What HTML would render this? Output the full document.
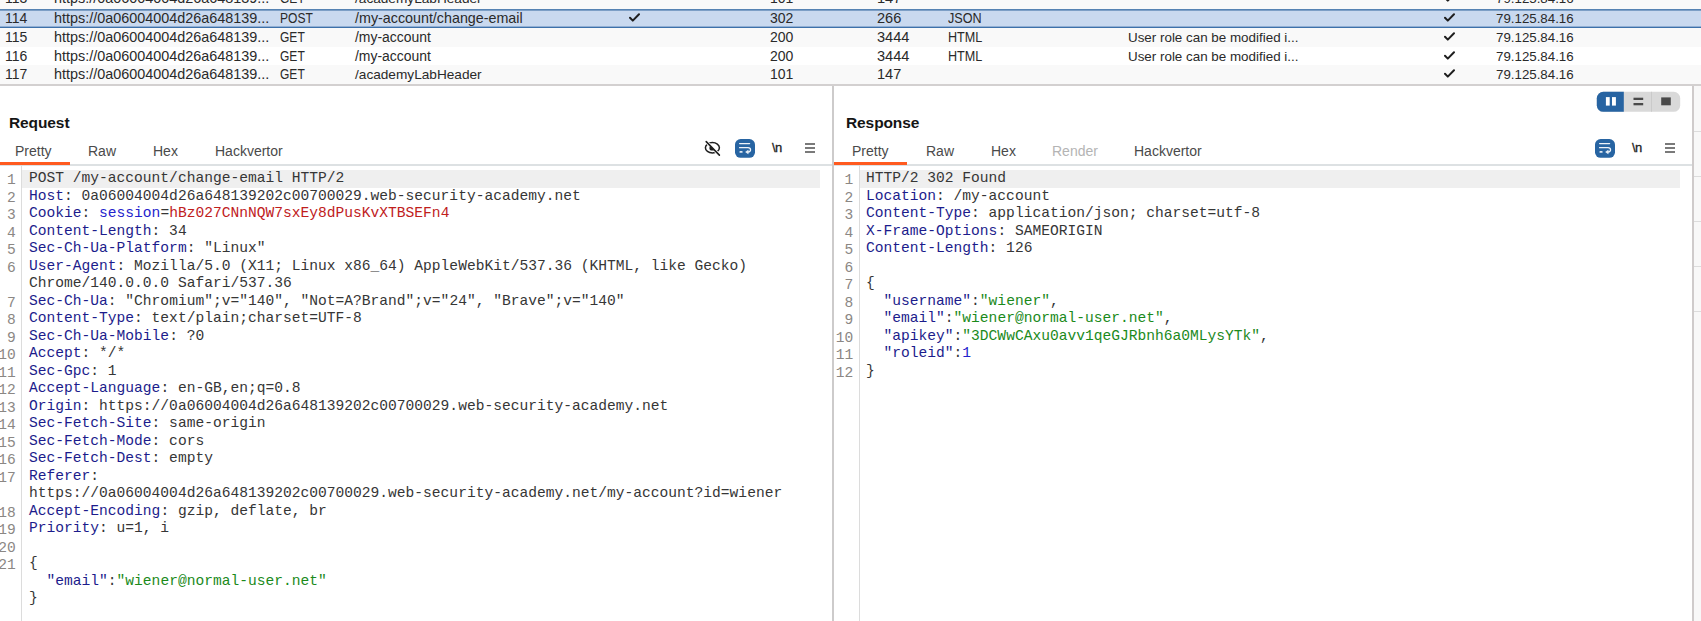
<!DOCTYPE html>
<html><head><meta charset="utf-8">
<style>
*{margin:0;padding:0;box-sizing:border-box}
html,body{width:1701px;height:621px;overflow:hidden;background:#fff}
body{position:relative;font-family:"Liberation Sans",sans-serif;color:#2a2a2a}
.abs{position:absolute}
.row{position:absolute;left:0;width:1701px;height:19px;background:#f9f9f9}
.row.w{background:#fff}
.row.sel{background:linear-gradient(to bottom,#5683b3 0,#5683b3 1px,#7d9fc6 1px,#7d9fc6 2px,#c9d9ef 2px,#c9d9ef 17px,#92afd3 17px,#92afd3 18px,#3d71aa 18px,#3d71aa 19px)}
.c{position:absolute;top:0;font-size:14px;line-height:19px;white-space:nowrap}
.sx{display:inline-block;transform-origin:0 50%}
.chk{position:absolute;width:11px;height:9px}
.mono{font-family:"Liberation Mono",monospace;font-size:14.6px;white-space:pre}
.ln{position:absolute;left:0;width:16px;text-align:right;color:#8b8784;font-family:"Liberation Mono",monospace;font-size:14.58px;line-height:17.5px;white-space:pre}
.code{position:absolute;line-height:17.5px;color:#363636}
.hn{color:#1c1c8c}
.sb{color:#2323cc}
.rd{color:#c0201c}
.gr{color:#1b8a1b}
.nm{color:#2323cc}
.tab{position:absolute;font-size:14px;color:#4a4a4a;line-height:16px;white-space:nowrap}
.ttl{position:absolute;font-size:15.5px;font-weight:bold;color:#151515;line-height:18px;letter-spacing:-0.1px}
</style></head><body>

<!-- ===== TABLE ===== -->
<div id="tbl">
<div class="row" style="top:-10px;height:19px">
<div class="c" style="left:5px;top:-1px;">113</div>
<div class="c" style="left:54px;font-size:14.4px;top:-1px;">https://0a06004004d26a648139...</div>
<div class="c" style="left:280px;top:-1px;"><span class="sx" style="transform:scaleX(0.86)">GET</span></div>
<div class="c" style="left:355px;font-size:13.65px;top:-1px;">/academyLabHeader</div>
<div class="c" style="left:770px;top:-1px;">101</div>
<div class="c" style="left:877px;font-size:14.6px;top:-1px;">147</div>
<svg class="chk" style="left:1444px;top:3px" viewBox="0 0 11 9"><path d="M1 4.8 L3.8 7.6 L10 1.2" fill="none" stroke="#1e1e1e" stroke-width="2" stroke-linecap="round" stroke-linejoin="round"/></svg>
<div class="c" style="left:1496px;font-size:13.3px;top:-1px;">79.125.84.16</div>
</div>
<div class="row sel" style="top:9px;height:19px">
<div class="c" style="left:5px;top:0px;">114</div>
<div class="c" style="left:54px;font-size:14.4px;top:0px;">https://0a06004004d26a648139...</div>
<div class="c" style="left:280px;top:0px;"><span class="sx" style="transform:scaleX(0.86)">POST</span></div>
<div class="c" style="left:355px;font-size:14.3px;top:0px;">/my-account/change-email</div>
<svg class="chk" style="left:629px;top:4px" viewBox="0 0 11 9"><path d="M1 4.8 L3.8 7.6 L10 1.2" fill="none" stroke="#1e1e1e" stroke-width="2" stroke-linecap="round" stroke-linejoin="round"/></svg>
<div class="c" style="left:770px;top:0px;">302</div>
<div class="c" style="left:877px;font-size:14.6px;top:0px;">266</div>
<div class="c" style="left:948px;top:0px;"><span class="sx" style="transform:scaleX(0.9)">JSON</span></div>
<svg class="chk" style="left:1444px;top:4px" viewBox="0 0 11 9"><path d="M1 4.8 L3.8 7.6 L10 1.2" fill="none" stroke="#1e1e1e" stroke-width="2" stroke-linecap="round" stroke-linejoin="round"/></svg>
<div class="c" style="left:1496px;font-size:13.3px;top:0px;">79.125.84.16</div>
</div>
<div class="row" style="top:28px;height:19px">
<div class="c" style="left:5px;top:0px;">115</div>
<div class="c" style="left:54px;font-size:14.4px;top:0px;">https://0a06004004d26a648139...</div>
<div class="c" style="left:280px;top:0px;"><span class="sx" style="transform:scaleX(0.86)">GET</span></div>
<div class="c" style="left:355px;font-size:13.95px;top:0px;">/my-account</div>
<div class="c" style="left:770px;top:0px;">200</div>
<div class="c" style="left:877px;font-size:14.6px;top:0px;">3444</div>
<div class="c" style="left:948px;top:0px;"><span class="sx" style="transform:scaleX(0.9)">HTML</span></div>
<div class="c" style="left:1128px;font-size:13.4px;top:0px;">User role can be modified i...</div>
<svg class="chk" style="left:1444px;top:4px" viewBox="0 0 11 9"><path d="M1 4.8 L3.8 7.6 L10 1.2" fill="none" stroke="#1e1e1e" stroke-width="2" stroke-linecap="round" stroke-linejoin="round"/></svg>
<div class="c" style="left:1496px;font-size:13.3px;top:0px;">79.125.84.16</div>
</div>
<div class="row w" style="top:47px;height:19px">
<div class="c" style="left:5px;top:0px;">116</div>
<div class="c" style="left:54px;font-size:14.4px;top:0px;">https://0a06004004d26a648139...</div>
<div class="c" style="left:280px;top:0px;"><span class="sx" style="transform:scaleX(0.86)">GET</span></div>
<div class="c" style="left:355px;font-size:13.95px;top:0px;">/my-account</div>
<div class="c" style="left:770px;top:0px;">200</div>
<div class="c" style="left:877px;font-size:14.6px;top:0px;">3444</div>
<div class="c" style="left:948px;top:0px;"><span class="sx" style="transform:scaleX(0.9)">HTML</span></div>
<div class="c" style="left:1128px;font-size:13.4px;top:0px;">User role can be modified i...</div>
<svg class="chk" style="left:1444px;top:4px" viewBox="0 0 11 9"><path d="M1 4.8 L3.8 7.6 L10 1.2" fill="none" stroke="#1e1e1e" stroke-width="2" stroke-linecap="round" stroke-linejoin="round"/></svg>
<div class="c" style="left:1496px;font-size:13.3px;top:0px;">79.125.84.16</div>
</div>
<div class="row" style="top:65px;height:19px">
<div class="c" style="left:5px;top:0px;">117</div>
<div class="c" style="left:54px;font-size:14.4px;top:0px;">https://0a06004004d26a648139...</div>
<div class="c" style="left:280px;top:0px;"><span class="sx" style="transform:scaleX(0.86)">GET</span></div>
<div class="c" style="left:355px;font-size:13.65px;top:0px;">/academyLabHeader</div>
<div class="c" style="left:770px;top:0px;">101</div>
<div class="c" style="left:877px;font-size:14.6px;top:0px;">147</div>
<svg class="chk" style="left:1444px;top:4px" viewBox="0 0 11 9"><path d="M1 4.8 L3.8 7.6 L10 1.2" fill="none" stroke="#1e1e1e" stroke-width="2" stroke-linecap="round" stroke-linejoin="round"/></svg>
<div class="c" style="left:1496px;font-size:13.3px;top:0px;">79.125.84.16</div>
</div>
</div>

<!-- ===== PANELS ===== -->
<div id="panels">

<div class="abs" style="left:0;top:84px;width:1701px;height:2px;background:#d3d0d0"></div>
<div class="abs" style="left:832px;top:86px;width:2px;height:535px;background:#cdcbcb"></div>
<div class="abs" style="left:1692px;top:86px;width:2px;height:535px;background:#cfcbcb"></div>
<div class="abs" style="left:1694px;top:86px;width:7px;height:535px;background:#f8f8f8"></div>
<div class="abs" style="left:1694px;top:131px;width:7px;height:1px;background:#dcdcdc"></div><div class="abs" style="left:1694px;top:176px;width:7px;height:1px;background:#dcdcdc"></div><div class="abs" style="left:1694px;top:221px;width:7px;height:1px;background:#dcdcdc"></div><div class="abs" style="left:1694px;top:266px;width:7px;height:1px;background:#dcdcdc"></div><div class="abs" style="left:1694px;top:311px;width:7px;height:1px;background:#dcdcdc"></div>

<div class="ttl" style="left:9px;top:113.5px">Request</div>
<div class="ttl" style="left:846px;top:113.5px">Response</div>

<div class="tab" style="left:15px;top:142.6px">Pretty</div>
<div class="tab" style="left:88px;top:142.6px">Raw</div>
<div class="tab" style="left:153px;top:142.6px">Hex</div>
<div class="tab" style="left:215px;top:142.6px">Hackvertor</div>
<div class="abs" style="left:0;top:164px;width:832px;height:1.5px;background:#dde1e3"></div>
<div class="abs" style="left:0;top:162px;width:70px;height:2.5px;background:#ff5a1f"></div>

<div class="tab" style="left:852px;top:142.6px">Pretty</div>
<div class="tab" style="left:926px;top:142.6px">Raw</div>
<div class="tab" style="left:991px;top:142.6px">Hex</div>
<div class="tab" style="left:1052px;top:142.6px;color:#b4b4b4">Render</div>
<div class="tab" style="left:1134px;top:142.6px">Hackvertor</div>
<div class="abs" style="left:834px;top:164px;width:858px;height:1.5px;background:#dde1e3"></div>
<div class="abs" style="left:834px;top:162px;width:73px;height:2.5px;background:#ff5a1f"></div>

<svg class="abs" style="left:700px;top:136px" width="24" height="24" viewBox="0 0 24 24">
<defs><clipPath id="eyc"><polygon points="-3.6,-4.4 29.2,29.1 -10,29 -10,-4.4"/></clipPath></defs>
<ellipse cx="12.4" cy="11.8" rx="7" ry="5.2" fill="none" stroke="#1e1e1e" stroke-width="1.5"/>
<path d="M5.2 4.6 L20.4 20.2" stroke="#fff" stroke-width="3.2"/>
<circle cx="12.1" cy="11.9" r="2.7" fill="#1e1e1e" clip-path="url(#eyc)"/>
<path d="M6.2 5.6 L19.4 19.1" stroke="#1e1e1e" stroke-width="1.6" stroke-linecap="round"/>
</svg>
<svg class="abs" style="left:735px;top:139px" width="20" height="19" viewBox="0 0 20 19">
<rect x="0" y="0" width="20" height="18.8" rx="5.6" fill="#2764a2"/>
<path d="M4.6 4.6 H14.6" stroke="#eef3f9" stroke-width="1.3" stroke-linecap="round"/>
<path d="M4.6 8.7 H13 C16.4 8.7 16.4 13 13 13 H12" fill="none" stroke="#eef3f9" stroke-width="1.3" stroke-linecap="round"/>
<path d="M10.6 13 L13.2 11.2 L13.2 14.8 Z" fill="#e6edf5" stroke="#e6edf5" stroke-width="0.6" stroke-linejoin="round"/>
<rect x="4.5" y="12" width="3.1" height="1.8" rx="0.6" fill="#dfe8f2"/>
</svg>
<div class="abs" style="left:772px;top:141.2px;font-size:13px;line-height:14px;color:#222;letter-spacing:-0.6px;-webkit-text-stroke:0.3px #222">\n</div>
<svg class="abs" style="left:805px;top:143px" width="10" height="10" viewBox="0 0 10 10">
<rect x="0" y="0" width="10" height="2" fill="#7a7a7a"/><rect x="0" y="4" width="10" height="2" fill="#7a7a7a"/><rect x="0" y="8" width="10" height="2" fill="#7a7a7a"/></svg>
<svg class="abs" style="left:1595px;top:139px" width="20" height="19" viewBox="0 0 20 19">
<rect x="0" y="0" width="20" height="18.8" rx="5.6" fill="#2764a2"/>
<path d="M4.6 4.6 H14.6" stroke="#eef3f9" stroke-width="1.3" stroke-linecap="round"/>
<path d="M4.6 8.7 H13 C16.4 8.7 16.4 13 13 13 H12" fill="none" stroke="#eef3f9" stroke-width="1.3" stroke-linecap="round"/>
<path d="M10.6 13 L13.2 11.2 L13.2 14.8 Z" fill="#e6edf5" stroke="#e6edf5" stroke-width="0.6" stroke-linejoin="round"/>
<rect x="4.5" y="12" width="3.1" height="1.8" rx="0.6" fill="#dfe8f2"/>
</svg>
<div class="abs" style="left:1632px;top:141.2px;font-size:13px;line-height:14px;color:#222;letter-spacing:-0.6px;-webkit-text-stroke:0.3px #222">\n</div>
<svg class="abs" style="left:1665px;top:143px" width="10" height="10" viewBox="0 0 10 10">
<rect x="0" y="0" width="10" height="2" fill="#7a7a7a"/><rect x="0" y="4" width="10" height="2" fill="#7a7a7a"/><rect x="0" y="8" width="10" height="2" fill="#7a7a7a"/></svg>
<svg class="abs" style="left:1596px;top:91px" width="85" height="21" viewBox="0 0 85 21">
<defs><clipPath id="tc"><rect x="0.8" y="0.8" width="83.4" height="20" rx="6.5"/></clipPath></defs>
<g clip-path="url(#tc)">
<rect x="0" y="0" width="85" height="21" fill="#d9d9d9"/>
<rect x="0" y="0" width="27.8" height="21" fill="#2764a2"/>
<rect x="55.2" y="0" width="0.8" height="21" fill="#c6c6c6"/>
</g>
<rect x="9.9" y="6.1" width="3.8" height="8.5" fill="#fff"/>
<rect x="16" y="6.1" width="3.9" height="8.5" fill="#fff"/>
<rect x="37.5" y="6.7" width="9.7" height="2.3" fill="#4a4a4a"/>
<rect x="37.5" y="12" width="9.7" height="2.3" fill="#4a4a4a"/>
<rect x="65.2" y="6.4" width="9.6" height="7.9" fill="#4a4a4a"/>
</svg>

<div class="abs" style="left:21px;top:165px;width:1px;height:456px;background:#dcdcdc"></div>
<div class="abs" style="left:22px;top:170px;width:798px;height:18px;background:#efefef"></div>
<div class="abs" style="left:859px;top:165px;width:1px;height:456px;background:#dcdcdc"></div>
<div class="abs" style="left:860px;top:170px;width:820px;height:18px;background:#efefef"></div>

<div class="ln" style="left:-24.3px;width:40px;top:172.20px">1</div>
<div class="code mono" style="left:29.0px;top:170.00px">POST /my-account/change-email HTTP/2</div>
<div class="ln" style="left:-24.3px;width:40px;top:189.70px">2</div>
<div class="code mono" style="left:29.0px;top:187.50px"><span class="hn">Host</span>: 0a06004004d26a648139202c00700029.web-security-academy.net</div>
<div class="ln" style="left:-24.3px;width:40px;top:207.20px">3</div>
<div class="code mono" style="left:29.0px;top:205.00px"><span class="hn">Cookie</span>: <span class="sb">session</span>=<span class="rd">hBz027CNnNQW7sxEy8dPusKvXTBSEFn4</span></div>
<div class="ln" style="left:-24.3px;width:40px;top:224.70px">4</div>
<div class="code mono" style="left:29.0px;top:222.50px"><span class="hn">Content-Length</span>: 34</div>
<div class="ln" style="left:-24.3px;width:40px;top:242.20px">5</div>
<div class="code mono" style="left:29.0px;top:240.00px"><span class="hn">Sec-Ch-Ua-Platform</span>: &quot;Linux&quot;</div>
<div class="ln" style="left:-24.3px;width:40px;top:259.70px">6</div>
<div class="code mono" style="left:29.0px;top:257.50px"><span class="hn">User-Agent</span>: Mozilla/5.0 (X11; Linux x86_64) AppleWebKit/537.36 (KHTML, like Gecko)</div>
<div class="code mono" style="left:29.0px;top:275.00px">Chrome/140.0.0.0 Safari/537.36</div>
<div class="ln" style="left:-24.3px;width:40px;top:294.70px">7</div>
<div class="code mono" style="left:29.0px;top:292.50px"><span class="hn">Sec-Ch-Ua</span>: &quot;Chromium&quot;;v=&quot;140&quot;, &quot;Not=A?Brand&quot;;v=&quot;24&quot;, &quot;Brave&quot;;v=&quot;140&quot;</div>
<div class="ln" style="left:-24.3px;width:40px;top:312.20px">8</div>
<div class="code mono" style="left:29.0px;top:310.00px"><span class="hn">Content-Type</span>: text/plain;charset=UTF-8</div>
<div class="ln" style="left:-24.3px;width:40px;top:329.70px">9</div>
<div class="code mono" style="left:29.0px;top:327.50px"><span class="hn">Sec-Ch-Ua-Mobile</span>: ?0</div>
<div class="ln" style="left:-24.3px;width:40px;top:347.20px">10</div>
<div class="code mono" style="left:29.0px;top:345.00px"><span class="hn">Accept</span>: */*</div>
<div class="ln" style="left:-24.3px;width:40px;top:364.70px">11</div>
<div class="code mono" style="left:29.0px;top:362.50px"><span class="hn">Sec-Gpc</span>: 1</div>
<div class="ln" style="left:-24.3px;width:40px;top:382.20px">12</div>
<div class="code mono" style="left:29.0px;top:380.00px"><span class="hn">Accept-Language</span>: en-GB,en;q=0.8</div>
<div class="ln" style="left:-24.3px;width:40px;top:399.70px">13</div>
<div class="code mono" style="left:29.0px;top:397.50px"><span class="hn">Origin</span>: https://0a06004004d26a648139202c00700029.web-security-academy.net</div>
<div class="ln" style="left:-24.3px;width:40px;top:417.20px">14</div>
<div class="code mono" style="left:29.0px;top:415.00px"><span class="hn">Sec-Fetch-Site</span>: same-origin</div>
<div class="ln" style="left:-24.3px;width:40px;top:434.70px">15</div>
<div class="code mono" style="left:29.0px;top:432.50px"><span class="hn">Sec-Fetch-Mode</span>: cors</div>
<div class="ln" style="left:-24.3px;width:40px;top:452.20px">16</div>
<div class="code mono" style="left:29.0px;top:450.00px"><span class="hn">Sec-Fetch-Dest</span>: empty</div>
<div class="ln" style="left:-24.3px;width:40px;top:469.70px">17</div>
<div class="code mono" style="left:29.0px;top:467.50px"><span class="hn">Referer</span>:</div>
<div class="code mono" style="left:29.0px;top:485.00px">https://0a06004004d26a648139202c00700029.web-security-academy.net/my-account?id=wiener</div>
<div class="ln" style="left:-24.3px;width:40px;top:504.70px">18</div>
<div class="code mono" style="left:29.0px;top:502.50px"><span class="hn">Accept-Encoding</span>: gzip, deflate, br</div>
<div class="ln" style="left:-24.3px;width:40px;top:522.20px">19</div>
<div class="code mono" style="left:29.0px;top:520.00px"><span class="hn">Priority</span>: u=1, i</div>
<div class="ln" style="left:-24.3px;width:40px;top:539.70px">20</div>
<div class="code mono" style="left:29.0px;top:537.50px"></div>
<div class="ln" style="left:-24.3px;width:40px;top:557.20px">21</div>
<div class="code mono" style="left:29.0px;top:555.00px">{</div>
<div class="code mono" style="left:29.0px;top:572.50px">  <span class="hn">&quot;email&quot;</span>:<span class="gr">&quot;wiener@normal-user.net&quot;</span></div>
<div class="code mono" style="left:29.0px;top:590.00px">}</div>
<div class="ln" style="left:813.3px;width:40px;top:172.20px">1</div>
<div class="code mono" style="left:866.0px;top:170.00px">HTTP/2 302 Found</div>
<div class="ln" style="left:813.3px;width:40px;top:189.70px">2</div>
<div class="code mono" style="left:866.0px;top:187.50px"><span class="hn">Location</span>: /my-account</div>
<div class="ln" style="left:813.3px;width:40px;top:207.20px">3</div>
<div class="code mono" style="left:866.0px;top:205.00px"><span class="hn">Content-Type</span>: application/json; charset=utf-8</div>
<div class="ln" style="left:813.3px;width:40px;top:224.70px">4</div>
<div class="code mono" style="left:866.0px;top:222.50px"><span class="hn">X-Frame-Options</span>: SAMEORIGIN</div>
<div class="ln" style="left:813.3px;width:40px;top:242.20px">5</div>
<div class="code mono" style="left:866.0px;top:240.00px"><span class="hn">Content-Length</span>: 126</div>
<div class="ln" style="left:813.3px;width:40px;top:259.70px">6</div>
<div class="code mono" style="left:866.0px;top:257.50px"></div>
<div class="ln" style="left:813.3px;width:40px;top:277.20px">7</div>
<div class="code mono" style="left:866.0px;top:275.00px">{</div>
<div class="ln" style="left:813.3px;width:40px;top:294.70px">8</div>
<div class="code mono" style="left:866.0px;top:292.50px">  <span class="hn">&quot;username&quot;</span>:<span class="gr">&quot;wiener&quot;</span>,</div>
<div class="ln" style="left:813.3px;width:40px;top:312.20px">9</div>
<div class="code mono" style="left:866.0px;top:310.00px">  <span class="hn">&quot;email&quot;</span>:<span class="gr">&quot;wiener@normal-user.net&quot;</span>,</div>
<div class="ln" style="left:813.3px;width:40px;top:329.70px">10</div>
<div class="code mono" style="left:866.0px;top:327.50px">  <span class="hn">&quot;apikey&quot;</span>:<span class="gr">&quot;3DCWwCAxu0avv1qeGJRbnh6a0MLysYTk&quot;</span>,</div>
<div class="ln" style="left:813.3px;width:40px;top:347.20px">11</div>
<div class="code mono" style="left:866.0px;top:345.00px">  <span class="hn">&quot;roleid&quot;</span>:<span class="nm">1</span></div>
<div class="ln" style="left:813.3px;width:40px;top:364.70px">12</div>
<div class="code mono" style="left:866.0px;top:362.50px">}</div>

</div>

</body></html>
